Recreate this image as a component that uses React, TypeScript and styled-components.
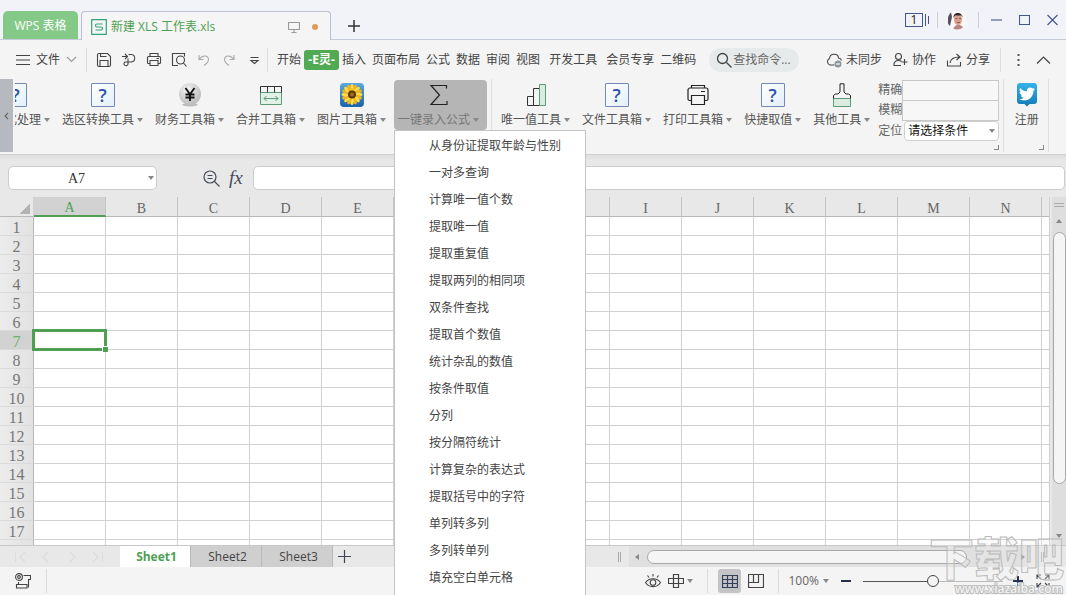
import React from "react";
import styled, { createGlobalStyle, css } from "styled-components";
import { FaTwitter } from "react-icons/fa";

const GREEN = "#4f9f52";
const UI_FONT = `"Open Sans", "Noto Sans CJK SC", sans-serif`;
const CELL_FONT = `"Liberation Serif", "Noto Sans CJK SC", serif`;

const GlobalStyle = createGlobalStyle`
  *, *::before, *::after { box-sizing: border-box; }
  body {
    margin: 0;
    overflow: hidden;
    font-family: ${UI_FONT};
    font-size: 12px;
    line-height: 16px;
    color: #444;
  }
  button, input, select { font: inherit; color: inherit; margin: 0; }
  button { padding: 0; border: 0; background: none; white-space: nowrap; }
  svg { display: block; flex: none; }
`;

const Window = styled.div`
  position: relative;
  display: flex;
  flex-direction: column;
  height: 100vh;
  overflow: hidden;
  background: #f4f4f4;
`;

const Icon = ({
  w = 16,
  h = 16,
  color = "#444",
  width = 1.1,
  children,
}: {
  w?: number;
  h?: number;
  color?: string;
  width?: number;
  children: React.ReactNode;
}) => (
  <svg width={w} height={h} viewBox={`0 0 ${w} ${h}`} fill="none" stroke={color} strokeWidth={width} aria-hidden="true">
    {children}
  </svg>
);

const Caret = styled.span<{ $dir?: "down" | "up" | "left" | "right" }>`
  flex: none;
  width: 0;
  height: 0;
  border: 3px solid transparent;
  ${({ $dir = "down" }) =>
    $dir === "down"
      ? css`border-top: 4px solid #888; border-bottom: 0;`
      : $dir === "up"
        ? css`border-bottom: 4px solid #888; border-top: 0;`
        : $dir === "left"
          ? css`border-right: 4px solid #888; border-left: 0;`
          : css`border-left: 4px solid #888; border-right: 0;`}
`;

const Divider = styled.span<{ $h?: number; $color?: string }>`
  flex: none;
  width: 1px;
  height: ${({ $h = 24 }) => $h}px;
  background: ${({ $color = "#dcdcdc" }) => $color};
`;

/* ---------- title bar ---------- */

const TitleBar = styled.header`
  flex: none;
  display: flex;
  align-items: flex-end;
  height: 40px;
  padding-left: 3px;
  background: linear-gradient(#c5cbd8, #c5cbd8) bottom / 100% 1px no-repeat #f2f3f8;
`;

const AppTab = styled.button`
  width: 75px;
  height: 28px;
  margin: 0 3px 1px 0;
  padding-top: 2px;
  border-radius: 5px 5px 0 0;
  background: #84c987;
  color: #fff;
`;

const DocTab = styled.div`
  display: flex;
  align-items: center;
  width: 250px;
  height: 29px;
  padding: 2px 12px 0 9px;
  border: 1px solid #b9bfce;
  border-bottom: 0;
  border-radius: 4px 4px 0 0;
  background: #f5f5f5;
  color: ${GREEN};
`;

const DocName = styled.span`
  flex: 1;
  padding-left: 4px;
`;

const Dot = styled.span`
  width: 6px;
  height: 6px;
  margin-left: 12px;
  border-radius: 50%;
  background: #dc9b5c;
`;

const NewTab = styled.button`
  align-self: center;
  margin: 12px auto 0 17px;
`;

const WindowTools = styled.div`
  display: flex;
  align-items: center;
  height: 40px;
  padding-right: 8px;
`;

const WindowCount = styled.button`
  display: flex;
  align-items: center;
  gap: 2px;
  margin-right: 8px;
`;

const CountBox = styled.span`
  width: 18px;
  height: 14px;
  border: 1px solid #46558a;
  color: #222;
  line-height: 12px;
  text-align: center;
`;

const Bar = styled.span<{ $h: number }>`
  width: 1px;
  height: ${({ $h }) => $h}px;
  background: #46558a;
`;

const Account = styled.button`
  margin: 0 11px 0 9px;
`;

const WindowButtons = styled.div`
  display: flex;
  gap: 17px;
  padding-left: 12px;
`;

/* ---------- menu row ---------- */

const MenuRow = styled.nav`
  flex: none;
  display: flex;
  align-items: center;
  height: 38px;
  padding: 1px 15px 0 16px;
`;

const FileButton = styled.button`
  display: flex;
  align-items: center;
  gap: 6px;
  margin-right: 9px;
`;

const QuickTools = styled.div`
  display: flex;
  align-items: center;
  gap: 9px;
  padding: 0 5px 0 9px;
`;

const Tabs = styled.div`
  display: flex;
  align-items: center;
  gap: 6px;
  padding-left: 9px;
`;

const TabButton = styled.button<{ $active?: boolean; $spaced?: boolean }>`
  ${({ $spaced }) => $spaced && css`margin-left: 3px;`}
  ${({ $active }) =>
    $active &&
    css`
      width: 35px;
      height: 20px;
      margin: 0 -3px;
      border-radius: 3px;
      background: #50a953;
      color: #fff;
      font-weight: 700;
    `}
`;

const Search = styled.label`
  display: flex;
  align-items: center;
  gap: 1px;
  width: 90px;
  height: 24px;
  margin: 0 auto 0 13px;
  padding-left: 7px;
  border-radius: 12px;
  background: #e7eaeb;
`;

const SearchInput = styled.input`
  flex: 1;
  min-width: 0;
  padding: 0;
  border: 0;
  outline: 0;
  background: none;
  &::placeholder { color: #666; opacity: 1; }
`;

const ActionButton = styled.button`
  display: flex;
  align-items: center;
  gap: 4px;
  margin-right: 10px;
`;

const RowEnd = styled.div`
  display: flex;
  align-items: center;
  gap: 16px;
`;

/* ---------- ribbon ---------- */

const Ribbon = styled.section`
  flex: none;
  display: flex;
  align-items: flex-start;
  height: 77px;
  padding-top: 1px;
  border-bottom: 1px solid #d0d0d0;
`;

const RibbonScroll = styled.button`
  flex: none;
  width: 13px;
  height: 73px;
  background: #b7b9c1;
`;

const ClippedItem = styled.div`
  display: flex;
  justify-content: flex-end;
  flex: none;
  width: 43px;
  margin-left: 2px;
  overflow: hidden;
`;

const ToolHolder = styled.div`
  position: relative;
  flex: none;
`;

const Tool = styled.button<{ $open?: boolean }>`
  flex: none;
  display: flex;
  flex-direction: column;
  align-items: center;
  gap: 5px;
  height: 50px;
  margin-top: 1px;
  padding: 3px 8px 0 4px;
  border-radius: 4px;
  color: #555;
  ${({ $open }) => $open && css`background: #b5b5b5; color: #777;`}
`;

const ToolLabel = styled.span`
  display: flex;
  align-items: center;
  gap: 3px;
`;

const HelpIcon = styled.span`
  width: 24px;
  height: 24px;
  border: 1px solid #7388b3;
  border-radius: 1px;
  background: linear-gradient(135deg, #fff, #e3effa);
  color: #2c55a5;
  font-size: 18px;
  font-weight: 600;
  line-height: 22px;
  text-align: center;
`;

const GroupLine = styled.span`
  flex: none;
  width: 1px;
  height: 73px;
  margin: 0 5px 0 4px;
  background: #e0e0e0;
`;

const Menu = styled.ul`
  position: absolute;
  z-index: 5;
  top: 51px;
  left: 0;
  width: 192px;
  margin: 0;
  padding: 1px 0 8px;
  border: 1px solid #c3c3c3;
  background: #fff;
  list-style: none;
`;

const MenuItem = styled.button`
  display: block;
  width: 100%;
  height: 27px;
  padding-left: 34px;
  text-align: left;
`;

const Locate = styled.div`
  display: flex;
  flex-direction: column;
  width: 121px;
  padding-top: 1px;
`;

const LocateRow = styled.label`
  position: relative;
  display: flex;
  align-items: center;
  height: 20px;
  color: #666;
`;

const LocateInput = styled.input`
  flex: 1;
  min-width: 0;
  height: 21px;
  border: 1px solid #c8c8c8;
  background: #f7f7f7;
`;

const LocateSelect = styled.select`
  flex: 1;
  height: 20px;
  margin-left: 2px;
  padding: 0 3px;
  appearance: none;
  border: 1px solid #d0d0d0;
  border-radius: 4px;
  background: #fff;
  color: #111;
`;

const SelectRow = styled(LocateRow)`
  margin-top: 1px;
`;

const SelectCaret = styled(Caret)`
  position: absolute;
  right: 4px;
`;

const Corner = styled.span`
  align-self: flex-end;
  width: 5px;
  height: 5px;
  margin-top: 4px;
  border: solid #888;
  border-width: 0 1px 1px 0;
`;

const Register = styled.div`
  display: flex;
  flex-direction: column;
  width: 35px;
`;

const RegisterTool = styled(Tool)`
  padding: 3px 0 0;
`;

const RegisterCorner = styled(Corner)`
  margin-top: 15px;
`;

/* ---------- formula bar ---------- */

const FormulaBar = styled.section`
  flex: none;
  display: flex;
  align-items: center;
  height: 42px;
  padding: 4px 1px 0 8px;
  background: linear-gradient(#dedede, #e8e8e8 6px);
`;

const NameBox = styled.div`
  position: relative;
  display: flex;
  align-items: center;
  width: 149px;
`;

const BoxInput = styled.input`
  flex: 1;
  min-width: 0;
  height: 24px;
  border: 1px solid #cdcdcd;
  border-radius: 5px;
  background: #fff;
  color: #333;
`;

const NameInput = styled(BoxInput)`
  padding: 2px 12px 0 0;
  font-family: ${CELL_FONT};
  font-size: 14px;
  text-align: center;
`;

const NameCaret = styled(Caret)`
  position: absolute;
  right: 3px;
`;

const FormulaTools = styled.div`
  display: flex;
  align-items: center;
  gap: 9px;
  padding: 0 10px 0 46px;
`;

const Fx = styled.button`
  color: #454b58;
  font-family: "Liberation Serif", serif;
  font-size: 19px;
  font-style: italic;
  line-height: 20px;
`;

/* ---------- sheet ---------- */

const SheetArea = styled.main`
  flex: 1;
  display: flex;
  min-height: 0;
`;

const GridClip = styled.div`
  flex: 1;
  min-width: 0;
  overflow: hidden;
  background: #fff;
`;

const Grid = styled.table`
  width: 0;
  table-layout: fixed;
  border-collapse: separate;
  border-spacing: 0;
`;

const HeadCol = styled.col`
  width: 34px;
`;

const DataCol = styled.col`
  width: 72px;
`;

const Corner0 = styled.th`
  height: 20px;
  padding: 0;
  border-right: 1px solid #d0d0d0;
  border-bottom: 1px solid #b8b8b8;
  background: linear-gradient(135deg, transparent 50%, #b3b3b3 50%) 20px 7px / 10px 10px no-repeat #e8e8e8;
`;

const ColHead = styled.th<{ $active?: boolean }>`
  height: 20px;
  padding: 4px 0 0;
  border-right: 1px solid #c4c4c4;
  border-bottom: 1px solid #b8b8b8;
  background: #e8e8e8;
  color: #666;
  font: 400 14px / 15px ${CELL_FONT};
  ${({ $active }) =>
    $active && css`padding-top: 3px; border-bottom: 2px solid ${GREEN}; background: #d2d2d2; color: ${GREEN};`}
`;

const RowHead = styled.th<{ $active?: boolean }>`
  height: 19px;
  padding: 3px 0 0;
  border-right: 1px solid #b8b8b8;
  border-bottom: 1px solid #dadada;
  background: linear-gradient(90deg, #ececec, #e2e2e2);
  color: #777;
  font: 400 16px / 15px ${CELL_FONT};
  ${({ $active }) => $active && css`background: #d2d2d2; color: #6cb46e;`}
`;

const Cell = styled.td`
  position: relative;
  padding: 0;
  border-right: 1px solid #d0d0d0;
  border-bottom: 1px solid #d0d0d0;
`;

const Selection = styled.span`
  position: absolute;
  z-index: 1;
  inset: -2px;
  border: 3px solid ${GREEN};
  &::after {
    content: "";
    position: absolute;
    right: -4px;
    bottom: -4px;
    width: 6px;
    height: 6px;
    border: solid #fff;
    border-width: 1px 0 0 1px;
    background: ${GREEN};
  }
`;

const VScroll = styled.div`
  flex: none;
  display: flex;
  flex-direction: column;
  align-items: center;
  width: 17px;
  padding: 6px 0 7px 2px;
  border-left: 1px solid #cfcfcf;
  background: linear-gradient(90deg, #e8e8e8 2px, #dedede 2px);
`;

const SplitHandle = styled.span<{ $vertical?: boolean }>`
  flex: none;
  ${({ $vertical }) =>
    $vertical
      ? css`width: 3px; height: 10px; border: solid #aaa; border-width: 0 1px;`
      : css`width: 10px; height: 4px; margin-bottom: 12px; border: solid #aaa; border-width: 1px 0;`}
`;

const VThumb = styled.span`
  width: 13px;
  height: 81%;
  max-height: 252px;
  margin: 9px 0 auto;
  border: 1px solid #a8a8a8;
  border-radius: 7px;
  background: #f5f5f5;
`;

/* ---------- sheet tabs ---------- */

const SheetBar = styled.footer`
  flex: none;
  display: flex;
  align-items: stretch;
  height: 22px;
  border-top: 1px solid #c8c8c8;
  background: #e8e8e8;
`;

const SheetNav = styled.div`
  display: flex;
  align-items: center;
  gap: 14px;
  width: 120px;
  padding-left: 14px;
`;

const SheetTab = styled.button<{ $active?: boolean }>`
  width: 71px;
  padding-left: 3px;
  border-right: 1px solid #b9b9b9;
  background: #cfcfcf;
  ${({ $active }) => $active && css`background: #fff; color: ${GREEN}; font-weight: 700;`}
`;

const AddSheet = styled.button`
  margin: 0 auto 0 5px;
`;

const HScroll = styled.div`
  display: flex;
  align-items: center;
  width: 42%;
  padding-right: 22px;
`;

const HTrack = styled.div`
  flex: 1;
  display: flex;
  align-items: center;
  gap: 8px;
  height: 21px;
  margin: 0 12px 0 8px;
  padding: 0 4px 0 6px;
  background: #e0e0e0;
`;

const HThumb = styled.span`
  width: 82%;
  height: 14px;
  margin-right: auto;
  border: 1px solid #a8a8a8;
  border-radius: 7px;
  background: #f5f5f5;
`;

/* ---------- status bar ---------- */

const StatusBar = styled.footer`
  flex: none;
  display: flex;
  align-items: center;
  height: 28px;
  padding: 0 16px 0 15px;
`;

const StatusLeft = styled.div`
  display: flex;
  align-items: center;
  gap: 15px;
  margin-right: auto;
`;

const StatusGroup = styled.div`
  display: flex;
  align-items: center;
  gap: 7px;
  margin-right: 14px;
`;

const ReadButton = styled.button`
  display: flex;
  align-items: center;
  gap: 3px;
`;

const ViewButton = styled.button<{ $active?: boolean }>`
  display: flex;
  align-items: center;
  justify-content: center;
  height: 24px;
  ${({ $active }) => $active && css`width: 23px; margin-left: 10px; border-radius: 3px; background: #c4c4c6;`}
`;

const ZoomValue = styled.button`
  display: flex;
  align-items: center;
  gap: 4px;
  margin: 0 12px 0 9px;
  color: #666;
`;

const ZoomSlider = styled.input`
  width: 140px;
  height: 14px;
  margin: 0 10px 0 12px;
  appearance: none;
  background: linear-gradient(90deg, #555 50%, #bbb 50%) center / 100% 1px no-repeat;
  &::-webkit-slider-thumb {
    appearance: none;
    width: 12px;
    height: 12px;
    border: 1px solid #444;
    border-radius: 50%;
    background: #f4f4f4;
  }
`;

const FullScreen = styled.button`
  margin-left: 13px;
`;

const Watermark = styled.div`
  position: absolute;
  z-index: 6;
  right: 2px;
  bottom: 0;
  width: 136px;
  height: 60px;
  overflow: hidden;
  color: rgba(240, 240, 240, 0.3);
  font-size: 45px;
  font-weight: 900;
  line-height: 48px;
  text-align: right;
  white-space: nowrap;
  pointer-events: none;
  -webkit-text-stroke: 1px #bcbcbc;
`;

const WatermarkUrl = styled.span`
  position: absolute;
  right: 1px;
  bottom: 0;
  color: #f2f2f2;
  font-size: 12px;
  font-weight: 600;
  line-height: 12px;
  paint-order: stroke;
  -webkit-text-stroke: 2px #bcbcbc;
`;

/* ---------- drawings ---------- */

const YuanIcon = () => (
  <svg width="24" height="24" viewBox="0 0 24 24" aria-hidden="true">
    <defs>
      <radialGradient id="coin" cx="0.4" cy="0.3" r="0.8">
        <stop offset="0" stopColor="#f2f2f2" />
        <stop offset="1" stopColor="#b4b4b4" />
      </radialGradient>
    </defs>
    <ellipse cx="12" cy="21.8" rx="8" ry="1.6" fill="#bdbdbd" />
    <circle cx="12" cy="11" r="11" fill="url(#coin)" />
    <path d="M7.5 5l4.5 6.2L16.5 5M12 11v7M7.5 11.5h9M7.5 14.5h9" stroke="#111" strokeWidth="1.9" fill="none" />
  </svg>
);

const MergeIcon = () => (
  <svg width="24" height="24" viewBox="0 0 24 24" fill="none" aria-hidden="true">
    <path d="M1.5 9.500h21v12h-21z" fill="#e2f1e8" stroke="#5d9a78" />
    <path d="M1.500 9.500v-6h21v6M8.500 3.500v6M15.500 3.500v6" stroke="#333" />
    <path d="M5 15.500h14M7.500 13L5 15.500l2.500 2.500M16.500 13L19 15.500l-2.500 2.500" stroke="#5d9a78" />
  </svg>
);

const SunflowerIcon = () => (
  <svg width="24" height="24" viewBox="0 0 24 24" aria-hidden="true">
    <defs>
      <linearGradient id="sky" x1="0" y1="0" x2="0" y2="1">
        <stop offset="0" stopColor="#5aa9de" />
        <stop offset="1" stopColor="#1a62ac" />
      </linearGradient>
    </defs>
    <rect width="24" height="24" rx="4" fill="url(#sky)" />
    {Array.from({ length: 16 }, (_, i) => (
      <ellipse key={i} cx="12" cy="5" rx="1.800" ry="4" fill={i % 2 ? "#f0b41c" : "#ffdc48"} transform={`rotate(${i * 22.5} 12 11.500)`} />
    ))}
    <circle cx="12" cy="11.500" r="4" fill="#5a3612" />
    <circle cx="12" cy="11.500" r="2" fill="#a86a1c" />
  </svg>
);

const SigmaIcon = () => (
  <Icon w={24} h={24} color="#222" width={1.2}>
    <path d="M19.500 5.500V2.500H4L12.500 12 4 21.500h16V18" />
  </Icon>
);

const BarsIcon = () => (
  <svg width="24" height="24" viewBox="0 0 24 24" fill="none" stroke="#333" aria-hidden="true">
    <path d="M3.500 13.500h6v9h-6zM9.500 5.500h6v17h-6z" />
    <path d="M15.500 1.500h6v21h-6z" fill="#d8ecdf" stroke="#5d9a78" />
  </svg>
);

const PrinterIcon = () => (
  <Icon w={24} h={24} color="#222" width={1.200}>
    <path d="M5.500 5V2.500h13V5M5.500 17.500h-2a1.500 1.500 0 0 1-1.500-1.500V7a2 2 0 0 1 2-2h16a2 2 0 0 1 2 2v9a1.500 1.500 0 0 1-1.500 1.500h-2M5.500 12.500h13v9h-13zM15 8.500h4" />
  </Icon>
);

const BrushIcon = () => (
  <svg width="24" height="24" viewBox="0 0 24 24" fill="none" aria-hidden="true">
    <path d="M3.500 15.500h17v8h-17z" fill="#d8ecdf" stroke="#5d9a78" />
    <path d="M3.500 15.500v-3l2-1.500H8l2-2V.8h4V9l2 2h2.500l2 1.500v3" stroke="#222" />
  </svg>
);

const BirdIcon = () => (
  <svg width="24" height="24" viewBox="0 0 24 24" aria-hidden="true">
    <defs>
      <linearGradient id="bird" x1="0" y1="0" x2="0" y2="1">
        <stop offset="0" stopColor="#35b3ea" />
        <stop offset="1" stopColor="#1379b5" />
      </linearGradient>
    </defs>
    <path d="M5 0h14a3 3 0 0 1 3 3v15a3 3 0 0 1-3 3h-4.500L12 23.500 9.500 21H5a3 3 0 0 1-3-3V3a3 3 0 0 1 3-3z" fill="url(#bird)" />
    <FaTwitter x="4" y="3" size={16} color="#fff" />
  </svg>
);

const help = <HelpIcon>?</HelpIcon>;

const leftTools = [
  { label: "选区转换工具", icon: help },
  { label: "财务工具箱", icon: <YuanIcon /> },
  { label: "合并工具箱", icon: <MergeIcon /> },
  { label: "图片工具箱", icon: <SunflowerIcon /> },
];

const rightTools = [
  { label: "唯一值工具", icon: <BarsIcon /> },
  { label: "文件工具箱", icon: help },
  { label: "打印工具箱", icon: <PrinterIcon /> },
  { label: "快捷取值", icon: help },
  { label: "其他工具", icon: <BrushIcon /> },
];

const formulaMenu = [
  "从身份证提取年龄与性别", "一对多查询", "计算唯一值个数", "提取唯一值", "提取重复值",
  "提取两列的相同项", "双条件查找", "提取首个数值", "统计杂乱的数值", "按条件取值", "分列",
  "按分隔符统计", "计算复杂的表达式", "提取括号中的字符", "单列转多列", "多列转单列", "填充空白单元格",
];

const tabs = ["开始", "-E灵-", "插入", "页面布局", "公式", "数据", "审阅", "视图", "开发工具", "会员专享", "二维码"];
const columns = "ABCDEFGHIJKLMNO".split("");
const rows = Array.from({ length: 18 }, (_, i) => i + 1);

const RibbonTool = ({ label, icon, open }: { label: string; icon: React.ReactNode; open?: boolean }) => (
  <Tool $open={open} aria-expanded={open}>
    {icon}
    <ToolLabel>
      {label}
      <Caret />
    </ToolLabel>
  </Tool>
);

const TitleSection = () => (
  <TitleBar>
    <AppTab>WPS 表格</AppTab>
    <DocTab>
      <Icon color="#35a37c" width={1.200}>
        <path d="M.7.7h14.600v14.600H.7zM11.500 5H6a1.500 1.500 0 0 0 0 3h4a1.500 1.500 0 0 1 0 3H4.500" />
      </Icon>
      <DocName>新建 XLS 工作表.xls</DocName>
      <Icon w={12} h={12} color="#999">
        <path d="M.5 1.500h11v7H.5zM6 8.500v3M3.500 11.500h5" />
      </Icon>
      <Dot />
    </DocTab>
    <NewTab aria-label="新建标签">
      <Icon w={12} h={12} color="#333" width={1.500}>
        <path d="M6 0v12M0 6h12" />
      </Icon>
    </NewTab>
    <WindowTools>
      <WindowCount>
        <CountBox>1</CountBox>
        <Bar $h={12} />
        <Bar $h={8} />
      </WindowCount>
      <Divider $h={16} $color="#cdd0d9" />
      <Account aria-label="账号">
        <svg width="20" height="20" viewBox="0 0 20 20">
          <clipPath id="face"><circle cx="10" cy="10" r="9.500" /></clipPath>
          <g clipPath="url(#face)">
            <rect width="20" height="20" fill="#fbf8f7" />
            <path d="M1 4l3-2 1 5-2 9-2-1z" fill="#55505a" />
            <path d="M6 20c1-4 3-5 5-5s5 0 6 5z" fill="#b98484" />
            <ellipse cx="11" cy="9.500" rx="4" ry="5.500" fill="#d9a08c" />
            <path d="M6.500 8c-.5-7 9.500-6 9 0l-1-2.500H8z" fill="#2e2626" />
            <path d="M8.500 8.500h2M12 8.500h2M10 12.500h3" stroke="#8b5a50" />
          </g>
        </svg>
      </Account>
      <Divider $h={16} $color="#cdd0d9" />
      <WindowButtons>
        <button aria-label="最小化"><Icon w={11} h={12} color="#46558a"><path d="M0 6h11" /></Icon></button>
        <button aria-label="最大化"><Icon w={11} h={12} color="#46558a"><path d="M.5 1.500h10v9H.5z" /></Icon></button>
        <button aria-label="关闭"><Icon w={11} h={12} color="#46558a"><path d="M.5 1l10 10M10.500 1l-10 10" /></Icon></button>
      </WindowButtons>
    </WindowTools>
  </TitleBar>
);

const MenuSection = () => (
  <MenuRow>
    <FileButton>
      <Icon w={14} h={10}><path d="M0 .5h14M0 5h14M0 9.500h14" /></Icon>
      文件
      <Icon w={11} h={7} color="#999"><path d="M1 1l4.500 4.500L10 1" /></Icon>
    </FileButton>
    <Divider />
    <QuickTools>
      <button aria-label="保存">
        <Icon><path d="M3 1.500h8.500l3 3V13a1.500 1.500 0 0 1-1.500 1.500H3A1.500 1.500 0 0 1 1.500 13V3A1.500 1.500 0 0 1 3 1.500zM4.500 1.500v3h6M4 14.500V8.500h8v6" /></Icon>
      </button>
      <button aria-label="输出为PDF">
        <Icon><path d="M1 4.500h5M4 2l2.500 2.500L4 7M7.500 2.500h3a3.800 3.800 0 0 1 0 7.500H4a2 2 0 1 0 3 2V6.500" /></Icon>
      </button>
      <button aria-label="打印">
        <Icon><path d="M4 4.500v-3h8v3M4 11.500H2.500a1 1 0 0 1-1-1v-5a1 1 0 0 1 1-1h11a1 1 0 0 1 1 1v5a1 1 0 0 1-1 1H12M4 8.500h8v5H4zM10.500 6.500H13" /></Icon>
      </button>
      <button aria-label="打印预览">
        <Icon><path d="M7 13.500H1.500v-12h12v3" /><circle cx="9.500" cy="8" r="4" /><path d="M12.500 11l3 3.500" /></Icon>
      </button>
      <button aria-label="撤销">
        <Icon color="#aaa"><path d="M3 3v4.500h4.500M3 7.500C6 3 12 2.500 12.500 7.500c0 3-2.500 4.500-4.500 6" /></Icon>
      </button>
      <button aria-label="恢复">
        <Icon color="#aaa"><path d="M13 3v4.500H8.500M13 7.500C10 3 4 2.500 3.500 7.500c0 3 2.500 4.500 4.500 6" /></Icon>
      </button>
      <button aria-label="更多">
        <Icon><path d="M4.500 5.500h8M5 8.500l3.500 3 3.500-3z" /></Icon>
      </button>
    </QuickTools>
    <Divider />
    <Tabs>
      {tabs.map((t) => (
        <TabButton key={t} $active={t === "-E灵-"} $spaced={t === "开发工具" || t === "会员专享"}>{t}</TabButton>
      ))}
    </Tabs>
    <Search>
      <Icon width={1.300}><circle cx="6.500" cy="6.500" r="5" /><path d="M10.500 10.500l5 5" /></Icon>
      <SearchInput placeholder="查找命令..." aria-label="查找命令" />
    </Search>
    <ActionButton>
      <Icon>
        <path d="M8.500 13H4a3.500 3.500 0 0 1-.5-6.500C4 1 12 1 12.500 6c1.500 0 2.500 1 3 2.500" />
        <circle cx="12" cy="12" r="3.500" fill="#8e979d" stroke="none" />
        <path d="M10 12h4" stroke="#fff" />
      </Icon>
      未同步
    </ActionButton>
    <ActionButton>
      <Icon><circle cx="6.500" cy="4.500" r="3" /><path d="M9 13.500H2c-.5-3.500 2-5 4.500-5 1.500 0 2.500.5 3 1M12.500 7v6M9.500 10h6" /></Icon>
      协作
    </ActionButton>
    <ActionButton>
      <Icon><path d="M1.500 8.500v5.500h13V10M4 11c.5-4 3-6 9.500-6M10.500 2l3.500 3-3.500 3" /></Icon>
      分享
    </ActionButton>
    <RowEnd>
      <Divider />
      <button aria-label="更多选项">
        <svg width="3" height="14" viewBox="0 0 3 14" fill="#555"><path d="M.5 1h2v2h-2zM.5 6h2v2h-2zM.5 11h2v2h-2z" /></svg>
      </button>
      <button aria-label="收起功能区">
        <Icon w={15} h={8} width={1.200}><path d="M1 7.500l6.500-6.500L14 7.500" /></Icon>
      </button>
    </RowEnd>
  </MenuRow>
);

const RibbonSection = () => (
  <Ribbon>
    <RibbonScroll aria-label="向左滚动">
      <Icon w={13} h={8} color="#666"><path d="M8 1L5 4l3 3" /></Icon>
    </RibbonScroll>
    <ClippedItem><RibbonTool label="格式化处理" icon={help} /></ClippedItem>
    {leftTools.map((t) => <RibbonTool key={t.label} {...t} />)}
    <ToolHolder>
      <RibbonTool label="一键录入公式" icon={<SigmaIcon />} open />
      <Menu>
        {formulaMenu.map((m) => <li key={m}><MenuItem>{m}</MenuItem></li>)}
      </Menu>
    </ToolHolder>
    <GroupLine />
    {rightTools.map((t) => <RibbonTool key={t.label} {...t} />)}
    <Locate>
      <LocateRow>精确<LocateInput /></LocateRow>
      <LocateRow>模糊<LocateInput /></LocateRow>
      <SelectRow>
        定位
        <LocateSelect><option>请选择条件</option></LocateSelect>
        <SelectCaret />
      </SelectRow>
      <Corner />
    </Locate>
    <GroupLine />
    <Register>
      <RegisterTool><BirdIcon />注册</RegisterTool>
      <RegisterCorner />
    </Register>
    <GroupLine />
  </Ribbon>
);

const FormulaSection = () => (
  <FormulaBar>
    <NameBox>
      <NameInput defaultValue="A7" aria-label="名称框" />
      <NameCaret />
    </NameBox>
    <FormulaTools>
      <button aria-label="查找">
        <Icon w={17} h={17} color="#454b58" width={1.200}><circle cx="7" cy="7" r="6" /><path d="M4.500 5.500h5M4.500 8.500h5M11.500 11.500l5 5" /></Icon>
      </button>
      <Fx>fx</Fx>
    </FormulaTools>
    <BoxInput aria-label="编辑栏" />
  </FormulaBar>
);

const SheetSection = () => (
  <SheetArea>
    <GridClip>
      <Grid>
        <colgroup>
          <HeadCol />
          {columns.map((c) => <DataCol key={c} />)}
        </colgroup>
        <thead>
          <tr>
            <Corner0 />
            {columns.map((c) => <ColHead key={c} $active={c === "A"}>{c === "O" ? "" : c}</ColHead>)}
          </tr>
        </thead>
        <tbody>
          {rows.map((r) => (
            <tr key={r}>
              <RowHead $active={r === 7}>{r}</RowHead>
              {columns.map((c) => <Cell key={c}>{r === 7 && c === "A" && <Selection />}</Cell>)}
            </tr>
          ))}
        </tbody>
      </Grid>
    </GridClip>
    <VScroll>
      <SplitHandle />
      <Caret $dir="up" />
      <VThumb />
      <Caret />
    </VScroll>
  </SheetArea>
);

const SheetTabs = () => (
  <SheetBar>
    <SheetNav>
      <Icon w={12} h={12} color="#dcdcdc"><path d="M1.500 1v10M11 1L6 6l5 5" /></Icon>
      <Icon w={12} h={12} color="#dcdcdc"><path d="M8 1L3 6l5 5" /></Icon>
      <Icon w={12} h={12} color="#dcdcdc"><path d="M4 1l5 5-5 5" /></Icon>
      <Icon w={12} h={12} color="#dcdcdc"><path d="M10.500 1v10M1 1l5 5-5 5" /></Icon>
    </SheetNav>
    <SheetTab $active>Sheet1</SheetTab>
    <SheetTab>Sheet2</SheetTab>
    <SheetTab>Sheet3</SheetTab>
    <AddSheet aria-label="新建工作表">
      <Icon w={13} h={13} color="#3c4456" width={1.200}><path d="M6.500 0v13M0 6.500h13" /></Icon>
    </AddSheet>
    <HScroll>
      <SplitHandle $vertical />
      <HTrack>
        <Caret $dir="left" />
        <HThumb />
        <Caret $dir="right" />
      </HTrack>
      <SplitHandle $vertical />
    </HScroll>
  </SheetBar>
);

const StatusSection = () => (
  <StatusBar>
    <StatusLeft>
      <button aria-label="宏">
        <Icon>
          <circle cx="4" cy="4" r="3.400" /><circle cx="4" cy="4" r="1.400" />
          <path d="M8.500 2.500h7v4h-2v8M3.500 9v2.500M1.500 11.500h10.500v3.500H1.500z" />
        </Icon>
      </button>
      <Divider />
    </StatusLeft>
    <StatusGroup>
      <button aria-label="护眼模式">
        <Icon><path d="M.5 9.500C4 4.500 12 4.500 15.500 9.500 12 15 4 15 .5 9.500zM8 1v2.500M2.500 2.500L4 4.500M13.500 2.500L12 4.500" /><circle cx="8" cy="9.500" r="2.800" /></Icon>
      </button>
      <ReadButton aria-label="阅读模式">
        <Icon width={1.200}><path d="M5.500 1.500h5v13h-5zM.5 5.500h15v5H.5z" /></Icon>
        <Caret />
      </ReadButton>
    </StatusGroup>
    <Divider />
    <StatusGroup>
      <ViewButton $active aria-label="普通视图">
        <Icon color="#33405c" width={1.200}><path d="M.5 2.500h15v12H.5zM.5 6.500h15M.5 10.500h15M5.500 2.500v12M10.500 2.500v12" /></Icon>
      </ViewButton>
      <ViewButton aria-label="分页预览">
        <Icon width={1.200}><path d="M.5 1.500h15v13H.5zM.5 9.500h10v-8M5.500 1.500v8" /></Icon>
      </ViewButton>
    </StatusGroup>
    <Divider />
    <ZoomValue>100%<Caret /></ZoomValue>
    <button aria-label="缩小">
      <Icon w={10} h={10} color="#27324a" width={2}><path d="M0 5h10" /></Icon>
    </button>
    <ZoomSlider type="range" min={0} max={200} defaultValue={100} aria-label="缩放" />
    <button aria-label="放大">
      <Icon w={10} h={10} color="#27324a" width={2}><path d="M0 5h10M5 0v10" /></Icon>
    </button>
    <FullScreen aria-label="全屏">
      <Icon w={14} h={14}><path d="M1 5V1h4M1 1l4 4M9 1h4v4M13 1L9 5M1 9v4h4M1 13l4-4M13 9v4H9M13 13L9 9" /></Icon>
    </FullScreen>
  </StatusBar>
);

export default function App() {
  return (
    <Window>
      <GlobalStyle />
      <TitleSection />
      <MenuSection />
      <RibbonSection />
      <FormulaSection />
      <SheetSection />
      <SheetTabs />
      <StatusSection />
      <Watermark>
        下载吧
        <WatermarkUrl>www.xiazaiba.com</WatermarkUrl>
      </Watermark>
    </Window>
  );
}
